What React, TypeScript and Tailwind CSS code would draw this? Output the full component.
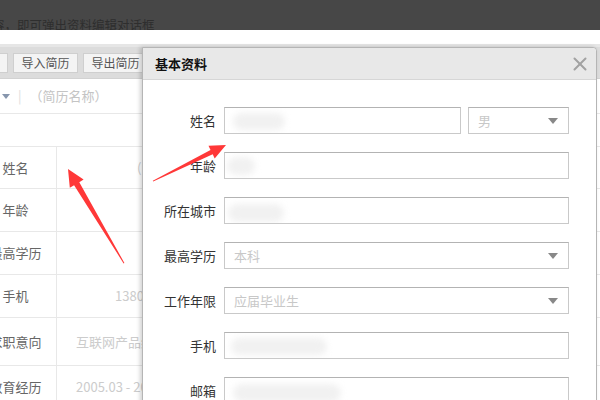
import React from "react";
import { X } from "lucide-react";

const font = { fontFamily: '"Noto Sans CJK SC", "Liberation Sans", sans-serif' };

function Blob({ className }: { className: string }) {
  return <div className={"absolute rounded-full bg-[#f1f1f1] blur-[3px] " + className} />;
}

function Field({
  label,
  children,
}: {
  label: string;
  children: React.ReactNode;
}) {
  return (
    <div className="flex items-center h-[27px]">
      <div className="w-[73px] text-right text-[13px] text-[#333] leading-none">{label}</div>
      <div className="ml-[8px] flex-1 flex h-full gap-[7px]">{children}</div>
    </div>
  );
}

function Input({ blob, className = "" }: { blob?: string; className?: string }) {
  return (
    <div className={"relative flex-1 h-full border border-[#c9c9c9] border-t-[#b3b3b3] bg-white overflow-hidden " + className}>
      {blob && <Blob className={blob} />}
    </div>
  );
}

function Select({ value, className = "" }: { value: string; className?: string }) {
  return (
    <div className={"relative h-full border border-[#c9c9c9] border-t-[#b3b3b3] bg-white flex items-center pl-[9px] pr-[10px] " + className}>
      <span className="flex-1 text-[13px] text-[#c8c8c8] leading-none">{value}</span>
      <span className="w-0 h-0 border-l-[5px] border-r-[5px] border-t-[6px] border-l-transparent border-r-transparent border-t-[#888]" />
    </div>
  );
}

const rows = [
  { label: "姓名", value: "(", h: "h-[42px]", indent: "pl-[80px]" },
  { label: "年龄", value: "", h: "h-[43px]", indent: "pl-[20px]" },
  { label: "最高学历", value: "", h: "h-[43px]", indent: "pl-[20px]" },
  { label: "手机", value: "1380", h: "h-[43px]", indent: "pl-[58px]" },
  { label: "求职意向", value: "互联网产品经理", h: "h-[48px]", indent: "pl-[19px]" },
  { label: "教育经历", value: "2005.03 - 2009.07", h: "h-[43px]", indent: "pl-[19px]" },
];

export default function App() {
  return (
    <div className="relative w-[600px] h-[400px] overflow-hidden bg-white" style={font}>
      {/* top band */}
      <div className="h-[30px] bg-[#474747] overflow-hidden">
        <div className="pt-[19px] ml-[-8px] text-[12.5px] text-[#2e2e2e] leading-none whitespace-nowrap">
          容，即可弹出资料编辑对话框
        </div>
      </div>
      <div className="h-[14px] bg-white" />

      {/* toolbar */}
      <div className="h-[35px] bg-[#dcdcdc] border-t-[3px] border-[#e6e6e6] border-b border-b-[#d2d2d2] flex items-center gap-[5px] pl-0">
        <div className="w-[8px] h-[20px] bg-[#f4f4f4] border border-[#cfcfcf] border-l-0" />
        <div className="w-[65px] h-[20px] bg-[#f4f4f4] border border-[#cfcfcf] flex items-center justify-center text-[12px] text-[#555]">
          导入简历
        </div>
        <div className="w-[65px] h-[20px] bg-[#f4f4f4] border border-[#cfcfcf] flex items-center justify-center text-[12px] text-[#555]">
          导出简历
        </div>
      </div>

      {/* resume name bar */}
      <div className="h-[35px] flex items-center border-b border-[#e8e8e8] text-[13px]">
        <span className="ml-[2px] w-0 h-0 border-l-[4px] border-r-[4px] border-t-[5px] border-l-transparent border-r-transparent border-t-[#8796ad]" />
        <span className="ml-[8px] text-[#ddd]">|</span>
        <span className="ml-[8px] text-[#c4c4c4]">（简历名称）</span>
      </div>
      <div className="h-[33px] border-b border-[#e8e8e8]" />

      {/* table */}
      {rows.map((r) => (
        <div key={r.label} className={"flex border-b border-[#e8e8e8] " + r.h}>
          <div className="w-[82px] ml-[-25px] flex items-center justify-center text-[13px] text-[#666] border-r border-[#e8e8e8]">
            {r.label}
          </div>
          <div className={"flex-1 flex items-center text-[13px] text-[#cccccc] whitespace-nowrap " + r.indent}>
            {r.value}
          </div>
        </div>
      ))}

      {/* dialog */}
      <div className="absolute left-[142px] top-[47px] w-[455px] h-[380px] bg-white border border-[#b5b5b5] rounded-tr-[4px] shadow-[-2px_0_4px_rgba(0,0,0,0.18)]">
        <div className="h-[32px] bg-[#e8e8e8] border-b border-[#d6d6d6] rounded-tr-[4px] flex items-center pl-[12px] pr-[5px]">
          <span className="flex-1 text-[13px] font-bold text-[#111]">基本资料</span>
          <X size={22} strokeWidth={2.2} className="text-[#a2a2a2]" />
        </div>
        <div className="pt-[27px] pr-[27px] flex flex-col gap-[18px]">
          <Field label="姓名">
            <Input className="flex-none w-[237px]" blob="left-[8px] top-[5px] w-[52px] h-[17px]" />
            <Select value="男" className="flex-1" />
          </Field>
          <Field label="年龄">
            <Input blob="left-[2px] top-[4px] w-[28px] h-[18px]" />
          </Field>
          <Field label="所在城市">
            <Input blob="left-[3px] top-[6px] w-[56px] h-[18px]" />
          </Field>
          <Field label="最高学历">
            <Select value="本科" className="flex-1" />
          </Field>
          <Field label="工作年限">
            <Select value="应届毕业生" className="flex-1" />
          </Field>
          <Field label="手机">
            <Input blob="left-[6px] top-[5px] w-[96px] h-[17px]" />
          </Field>
          <Field label="邮箱">
            <Input blob="left-[8px] top-[6px] w-[108px] h-[18px]" />
          </Field>
        </div>
      </div>

      {/* annotation arrows */}
      <svg className="absolute left-0 top-0 pointer-events-none" width="600" height="400" viewBox="0 0 600 400">
        <polygon
          fill="#ff3838"
          points="68,169 83.6,179.6 79.3,182.2 124.4,263 123.6,263.4 74.1,185.2 69.8,187.8"
        />
        <polygon
          fill="#ff3838"
          points="226,145 214.7,158.4 212.7,154.3 153.2,181.6 152.8,180.8 210.5,149.9 208.5,145.8"
        />
      </svg>
    </div>
  );
}
